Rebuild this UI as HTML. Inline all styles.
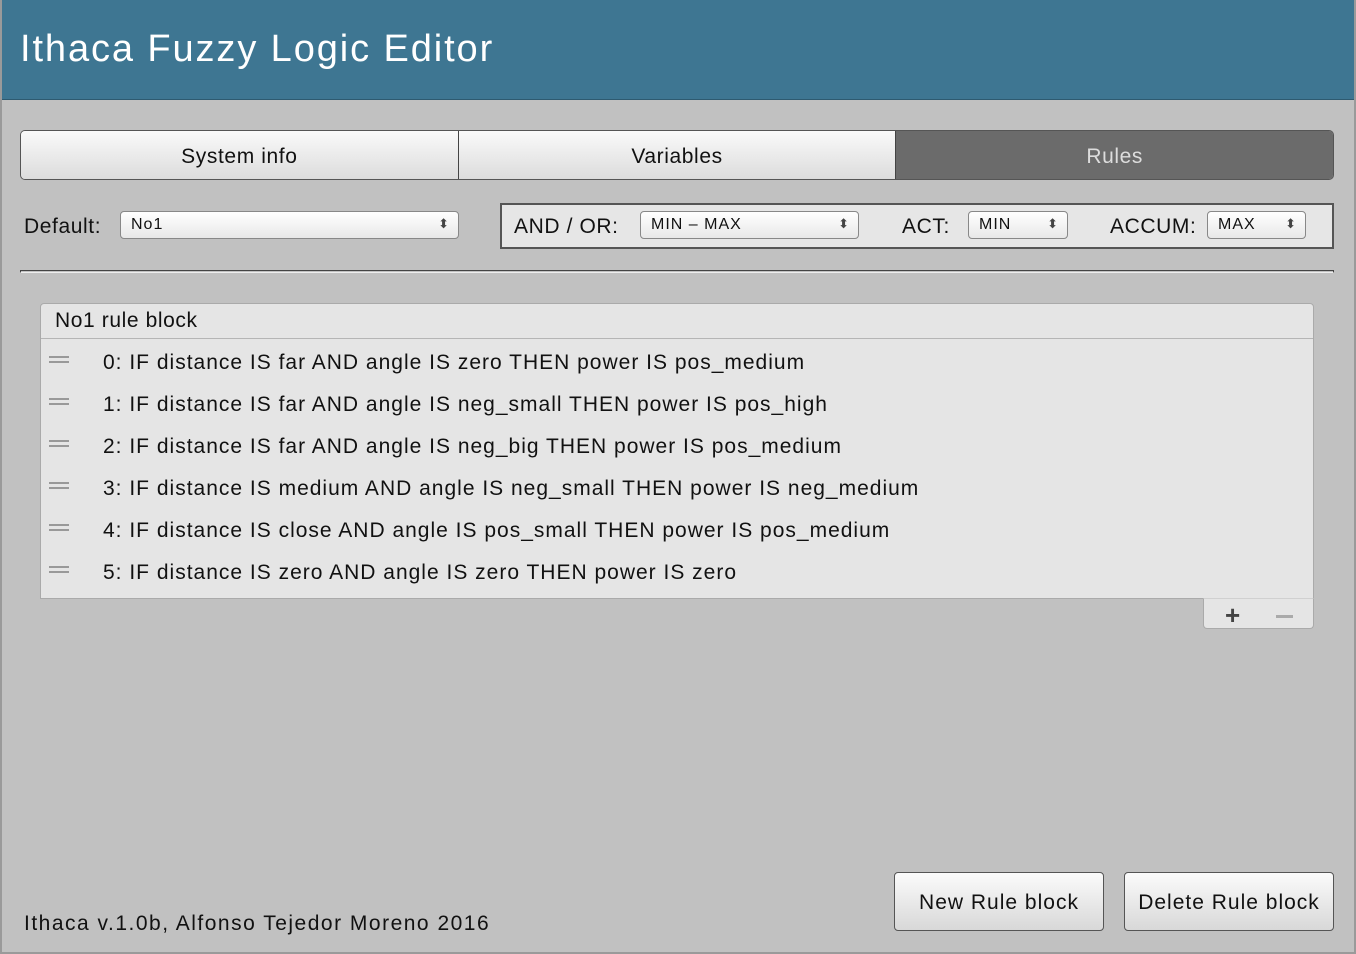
<!DOCTYPE html>
<html><head><style>
*{box-sizing:border-box;margin:0;padding:0}
body{width:1356px;height:954px;background:#c1c1c1;font-family:"Liberation Sans",sans-serif;color:#111;position:relative;overflow:hidden}
.frame{position:absolute;left:0;top:0;width:1356px;height:954px;border:2px solid #9a9a9a;border-top:none;pointer-events:none}
.hdr{position:absolute;left:0;top:0;width:1356px;height:100px;background:#3e7692;color:#fff;font-size:38px;letter-spacing:1.9px;padding:28px 0 0 20px;border-bottom:1px solid #2e5a70}
.abs{position:absolute}
.tabs{left:20px;top:130px;width:1314px;height:50px;border:1px solid #555;border-radius:5px;display:flex;overflow:hidden}
.tab{flex:1;display:flex;align-items:center;justify-content:center;font-size:21px;letter-spacing:0.6px;background:linear-gradient(#fafafa,#dcdcdc);border-right:1px solid #444;padding-top:4px}
.tab.on{background:#6b6b6b;color:#ddd;border-right:none}
.lbl{font-size:21px;letter-spacing:0.6px}
.sel{border:1px solid #888;border-radius:4px;background:linear-gradient(#fff,#e8e8e8);font-size:16px;padding:4px 10px;height:28px;letter-spacing:1px}
.sel::after{content:"⬍";position:absolute;right:8px;top:4px;font-size:13px;color:#444}
.box{left:500px;top:203px;width:834px;height:46px;border:2px solid #555;background:#e6e6e6}
.list{left:40px;top:303px;width:1274px;height:296px;background:#e5e5e5;border:1px solid #aaa;border-radius:4px 4px 0 0}
.lh{height:35px;border-bottom:1px solid #b5b5b5;font-size:21px;letter-spacing:0.6px;padding:5px 0 0 14px}
.row{height:42px;font-size:21px;display:flex;align-items:center;position:relative;letter-spacing:1px;padding-top:6px}
.row .h{position:absolute;left:8px;top:17px;width:20px;height:7px;border-top:2px solid #999;border-bottom:2px solid #999}
.row span{margin-left:62px}
.pm{left:1203px;top:598px;width:111px;height:31px;background:#e5e5e5;border:1px solid #aaa;border-top:1px solid #d0d0d0;border-radius:0 0 4px 4px}
.btn{border:1px solid #555;border-radius:4px;background:linear-gradient(#fbfbfb,#d8d8d8);font-size:21px;letter-spacing:1px;display:flex;align-items:center;justify-content:center;padding-top:2px}
</style></head><body>
<div class="hdr">Ithaca Fuzzy Logic Editor</div>
<div class="abs tabs"><div class="tab">System info</div><div class="tab">Variables</div><div class="tab on">Rules</div></div>
<div class="abs lbl" style="left:24px;top:215px">Default:</div>
<div class="abs sel" style="left:120px;top:211px;width:339px">No1</div>
<div class="abs box"></div>
<div class="abs lbl" style="left:514px;top:215px">AND / OR:</div>
<div class="abs sel" style="left:640px;top:211px;width:219px">MIN – MAX</div>
<div class="abs lbl" style="left:902px;top:215px">ACT:</div>
<div class="abs sel" style="left:968px;top:211px;width:100px">MIN</div>
<div class="abs lbl" style="left:1110px;top:215px">ACCUM:</div>
<div class="abs sel" style="left:1207px;top:211px;width:99px">MAX</div>
<div class="abs" style="left:20px;top:270px;width:1314px;height:3px;border-top:1px solid #444;border-bottom:1px solid #eee;border-left:1px solid #444;border-right:1px solid #444"></div>
<div class="abs list">
<div class="lh">No1 rule block</div>
<div class="row"><i class="h"></i><span>0: IF distance IS far AND angle IS zero THEN power IS pos_medium</span></div>
<div class="row"><i class="h"></i><span>1: IF distance IS far AND angle IS neg_small THEN power IS pos_high</span></div>
<div class="row"><i class="h"></i><span>2: IF distance IS far AND angle IS neg_big THEN power IS pos_medium</span></div>
<div class="row"><i class="h"></i><span>3: IF distance IS medium AND angle IS neg_small THEN power IS neg_medium</span></div>
<div class="row"><i class="h"></i><span>4: IF distance IS close AND angle IS pos_small THEN power IS pos_medium</span></div>
<div class="row"><i class="h"></i><span>5: IF distance IS zero AND angle IS zero THEN power IS zero</span></div>
</div>
<div class="abs pm"><div class="abs" style="left:21px;top:1px;font-size:26px;font-weight:bold;color:#444">+</div><div class="abs" style="left:72px;top:16px;width:17px;height:3px;background:#aaa"></div></div>
<div class="abs btn" style="left:894px;top:872px;width:210px;height:59px">New Rule block</div>
<div class="abs btn" style="left:1124px;top:872px;width:210px;height:59px">Delete Rule block</div>
<div class="abs lbl" style="left:24px;top:912px;letter-spacing:1.5px">Ithaca v.1.0b, Alfonso Tejedor Moreno 2016</div>
<div class="frame"></div>
</body></html>
